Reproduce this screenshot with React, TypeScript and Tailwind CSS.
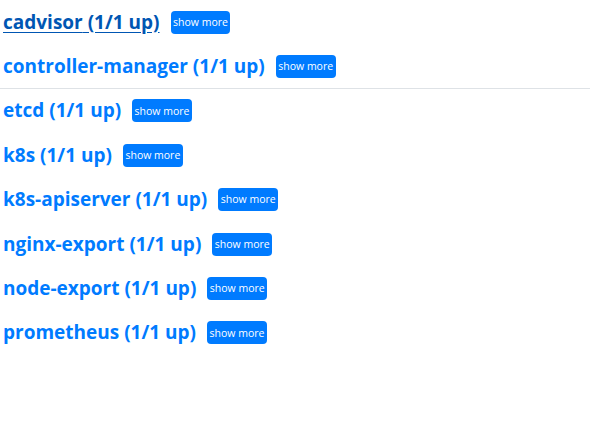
import { useState } from 'react'

const jobs = [
  'cadvisor',
  'controller-manager',
  'etcd',
  'k8s',
  'k8s-apiserver',
  'nginx-export',
  'node-export',
  'prometheus',
]

export default function App() {
  const [hovered] = useState('cadvisor')

  return (
    <div className="w-[590px] h-[445px] bg-white pl-[3px] pt-[10px]" style={{ fontFamily: '"Open Sans", "Noto Sans", sans-serif' }}>
      {jobs.map((job, i) => (
        <div key={job}>
          <div className="flex items-center h-[24px] mb-[20.43px]">
            <a
              href="#"
              className={`text-[19px] font-bold leading-none ${hovered === job ? 'text-[#0056b3] underline underline-offset-[3px]' : 'text-[#007bff]'}`}
            >
              {job} (1/1 up)
            </a>
            <button className="ml-[11px] h-[23px] px-[2.5px] rounded-[4px] bg-[#007bff] text-white text-[10.5px] leading-none">
              show more
            </button>
          </div>
          {i === 1 && <hr className="-ml-[3px] -mt-[11px] mb-[10px] border-t border-[#dee2e6]" />}
        </div>
      ))}
    </div>
  )
}
